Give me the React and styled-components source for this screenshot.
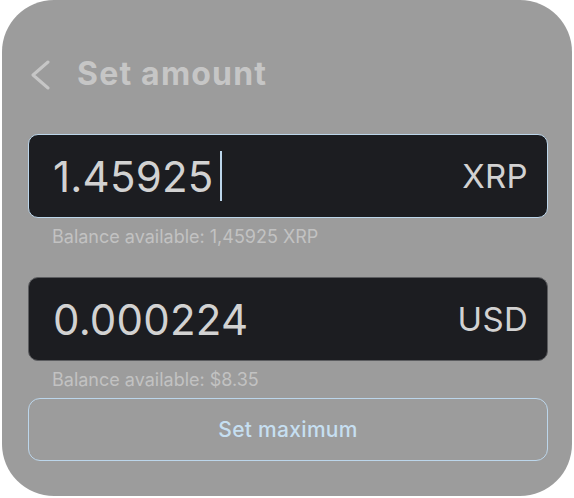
import React from "react";
import styled, { createGlobalStyle } from "styled-components";

const GlobalStyle = createGlobalStyle`
  html, body {
    margin: 0;
    padding: 0;
    background: #ffffff;
  }
  body {
    font-family: Inter, "Noto Sans", sans-serif;
    -webkit-font-smoothing: antialiased;
  }
`;

const Card = styled.div`
  box-sizing: border-box;
  width: 570px;
  height: 496px;
  margin: 0 2px;
  padding: 52px 24px 0 26px;
  background: #9c9c9c;
  border-radius: 52px;
  display: flex;
  flex-direction: column;
`;

const Header = styled.div`
  height: 42px;
  display: flex;
  align-items: center;
  gap: 25px;
`;

const BackIcon = styled.svg`
  width: 24px;
  height: 30px;
  flex: none;
  margin-top: 4px;
`;

const Title = styled.h1`
  margin: 0;
  font-size: 32px;
  font-weight: 700;
  color: #c6c6c6;
  letter-spacing: 1.2px;
`;

const AmountBox = styled.div`
  box-sizing: border-box;
  height: 84px;
  margin-top: ${(p) => p.$top}px;
  padding: 0 19px 0 24px;
  background: #1c1d21;
  border: 1.5px solid ${(p) => (p.$active ? "#bcd6eb" : "#5c5d60")};
  border-radius: 10px;
  display: flex;
  align-items: center;
  justify-content: space-between;
`;

const Value = styled.div`
  display: flex;
  align-items: center;
  font-size: 42px;
  font-weight: 400;
  color: #d2d2d2;
  letter-spacing: 0.2px;
`;

const Caret = styled.span`
  display: inline-block;
  width: 2px;
  height: 50px;
  margin-left: 7px;
  background: #bcd6eb;
`;

const Currency = styled.div`
  font-size: 33px;
  font-weight: 400;
  color: #d2d2d2;
  letter-spacing: 0.3px;
`;

const Balance = styled.div`
  margin: ${(p) => p.$top}px 0 0 24px;
  font-size: 18px;
  line-height: 20px;
  color: #c2c2c2;
`;

const MaxButton = styled.button`
  box-sizing: border-box;
  height: 63px;
  margin-top: 8px;
  padding: 0;
  background: transparent;
  border: 1.5px solid #bcd6eb;
  border-radius: 12px;
  font-family: Inter, "Noto Sans", sans-serif;
  font-size: 21px;
  font-weight: 500;
  letter-spacing: 0.3px;
  color: #c6dff1;
  cursor: pointer;
`;

export default function App() {
  return (
    <>
      <GlobalStyle />
      <Card>
        <Header>
          <BackIcon viewBox="0 0 24 30">
            <path
              d="M20 2 L5 15 L20 28"
              fill="none"
              stroke="#c6c6c6"
              strokeWidth="3"
              strokeLinecap="round"
              strokeLinejoin="round"
            />
          </BackIcon>
          <Title>Set amount</Title>
        </Header>

        <AmountBox $top={40} $active>
          <Value>
            1.45925
            <Caret />
          </Value>
          <Currency>XRP</Currency>
        </AmountBox>
        <Balance $top={9}>Balance available: 1,45925 XRP</Balance>

        <AmountBox $top={30}>
          <Value>0.000224</Value>
          <Currency>USD</Currency>
        </AmountBox>
        <Balance $top={9}>Balance available: $8.35</Balance>

        <MaxButton>Set maximum</MaxButton>
      </Card>
    </>
  );
}
